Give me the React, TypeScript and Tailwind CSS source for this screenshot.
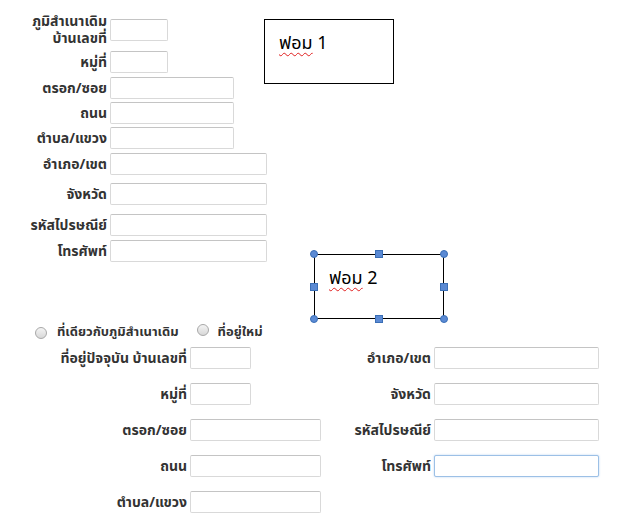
import React from 'react';

const thai = { fontFamily: 'Tahoma, "Noto Sans Thai", "Loma", "Garuda", "Noto Sans", "DejaVu Sans", sans-serif' };

const Field: React.FC<{ w: number; focused?: boolean }> = ({ w, focused }) => (
  <input
    type="text"
    style={{ width: w }}
    className={`h-[22px] rounded-[2px] border bg-white outline-none ${
      focused
        ? 'border-[#9cc0e6] shadow-[0_0_2px_rgba(120,170,230,0.6)]'
        : 'border-[#d9d9d9] border-t-[#c4c4c4]'
    }`}
  />
);

const Row: React.FC<{ label: string; w: number; mt: number }> = ({ label, w, mt }) => (
  <div className="flex h-[22px] items-center" style={{ marginTop: mt }}>
    <div className="w-[110px] pr-[3px] text-right">{label}</div>
    <Field w={w} />
  </div>
);

const Handle: React.FC<{ x: number; y: number; round?: boolean }> = ({ x, y, round }) => (
  <span
    className={`absolute h-[8px] w-[8px] border border-[#3b6fb6] bg-[#5b8ad4] ${round ? 'rounded-full' : ''}`}
    style={{ left: x - 4, top: y - 4 }}
  />
);

const Shape: React.FC<{ label: string; selected?: boolean; className: string }> = ({ label, selected, className }) => (
  <div className={`absolute h-[65px] w-[130px] border-[1.5px] border-black bg-white ${className}`}>
    <div
      className="pl-[14px] pt-[14px] text-[18px] font-normal leading-[20px] text-black"
      style={{ fontFamily: '"Noto Sans Thai", Tahoma, "Noto Sans", "DejaVu Sans", sans-serif' }}
    >
      <span className="underline decoration-wavy decoration-[#e02020] decoration-1 underline-offset-[3px]">ฟอม</span> {label}
    </div>
    {selected && (
      <>
        <Handle x={-1} y={-1} round />
        <Handle x={64} y={-1} />
        <Handle x={129} y={-1} round />
        <Handle x={-1} y={32} />
        <Handle x={129} y={32} />
        <Handle x={-1} y={64} round />
        <Handle x={64} y={64} />
        <Handle x={129} y={64} round />
      </>
    )}
  </div>
);

const Radio: React.FC = () => (
  <span className="inline-block h-[12px] w-[12px] rounded-full border border-[#a8a8a8] bg-gradient-to-b from-[#f4f4f4] to-[#d8d8d8]" />
);

export default function App() {
  const bottomLeft: [string, number][] = [
    ['ที่อยู่ปัจจุบัน บ้านเลขที่', 61],
    ['หมู่ที่', 61],
    ['ตรอก/ซอย', 131],
    ['ถนน', 131],
    ['ตำบล/แขวง', 131],
  ];
  const bottomRight: string[] = ['อำเภอ/เขต', 'จังหวัด', 'รหัสไปรษณีย์', 'โทรศัพท์'];

  return (
    <div className="relative h-[524px] w-[625px] overflow-hidden bg-white text-[14px] font-bold text-[#333]" style={thai}>
      <div className="pt-[13px]">
        <div className="flex h-[34px] items-center">
          <div className="w-[110px] pr-[3px] text-right leading-[17px]">
            <div>ภูมิสำเนาเดิม</div>
            <div>บ้านเลขที่</div>
          </div>
          <Field w={58} />
        </div>
        <Row label="หมู่ที่" w={58} mt={4} />
        <Row label="ตรอก/ซอย" w={124} mt={4} />
        <Row label="ถนน" w={124} mt={3} />
        <Row label="ตำบล/แขวง" w={124} mt={3} />
        <Row label="อำเภอ/เขต" w={157} mt={4} />
        <Row label="จังหวัด" w={157} mt={8} />
        <Row label="รหัสไปรษณีย์" w={157} mt={9} />
        <Row label="โทรศัพท์" w={157} mt={4} />
      </div>

      <div className="mt-[61px] flex h-[20px] items-center pl-[35px] text-[13px]">
        <Radio />
        <span className="ml-[10px]">ที่เดียวกับภูมิสำเนาเดิม</span>
        <span className="ml-[18px]">
          <Radio />
        </span>
        <span className="ml-[9px]">ที่อยู่ใหม่</span>
      </div>

      <div className="mt-[4px] grid grid-cols-[190px_131px_113px_165px] gap-y-[14px]">
        {bottomLeft.map(([label, w], i) => (
          <React.Fragment key={label}>
            <div className="flex h-[22px] items-center justify-end pr-[3px]">{label}</div>
            <div className="flex h-[22px] items-center">
              <Field w={w} />
            </div>
            <div className="flex h-[22px] items-center justify-end pr-[3px]">{bottomRight[i] ?? ''}</div>
            <div className="flex h-[22px] items-center">
              {bottomRight[i] && <Field w={165} focused={i === 3} />}
            </div>
          </React.Fragment>
        ))}
      </div>

      <Shape label="1" className="left-[264px] top-[19px]" />
      <Shape label="2" selected className="left-[314px] top-[254px]" />
    </div>
  );
}
